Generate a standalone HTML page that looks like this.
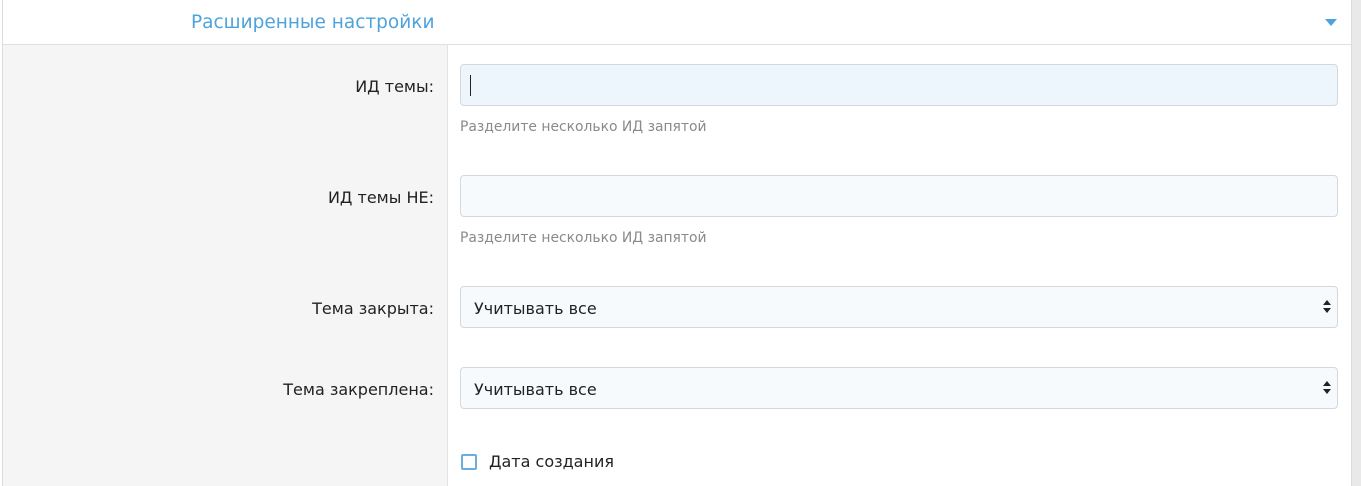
<!DOCTYPE html>
<html><head><meta charset="utf-8"><style>
body{margin:0;width:1361px;height:486px;overflow:hidden;background:#fff;font-family:"DejaVu Sans","Liberation Sans",sans-serif;position:relative}
.abs{position:absolute}
.lbl{right:927px;font-size:16px;color:#222;text-align:right}
.inp{left:460px;width:876px;height:40px;border:1px solid #d4d8dc;border-radius:4px;background:#f7fafd}
.hint{left:460px;font-size:13.9px;color:#8a8a8a}
.sel{font-size:16px;color:#222;line-height:43px;padding-left:13px;box-sizing:border-box;width:878px;height:42px}
.arr{position:absolute;right:6px;top:13px;width:0;height:0}
</style></head><body>
<div class="abs" style="left:2px;top:0;width:1px;height:486px;background:#dcdcdc"></div>
<div class="abs" style="left:1351px;top:0;width:10px;height:486px;background:#e9e9e9;border-left:1px solid #dcdcdc"></div>
<div class="abs" style="left:3px;top:44px;width:1348px;height:1px;background:#e0e0e0"></div>
<div class="abs" style="left:191px;top:12px;font-size:18.5px;color:#4ea3db">Расширенные настройки</div>
<div class="abs" style="left:1325px;top:19px;width:0;height:0;border-left:6px solid transparent;border-right:6px solid transparent;border-top:7px solid #4ea3db"></div>
<div class="abs" style="left:3px;top:45px;width:444px;height:441px;background:#f5f5f5;border-right:1px solid #e3e3e3"></div>

<div class="abs lbl" style="top:77px">ИД темы:</div>
<div class="abs inp" style="top:64px;background:#edf5fd"><div class="abs" style="left:9px;top:10px;width:1px;height:21px;background:#222"></div></div>
<div class="abs hint" style="top:119px">Разделите несколько ИД запятой</div>

<div class="abs lbl" style="top:188px">ИД темы НЕ:</div>
<div class="abs inp" style="top:175px"></div>
<div class="abs hint" style="top:230px">Разделите несколько ИД запятой</div>

<div class="abs lbl" style="top:299px">Тема закрыта:</div>
<div class="abs inp sel" style="top:286px">Учитывать все
<div class="arr" style="top:13px;border-left:4px solid transparent;border-right:4px solid transparent;border-bottom:5px solid #222"></div>
<div class="arr" style="top:21px;border-left:4px solid transparent;border-right:4px solid transparent;border-top:5px solid #222"></div></div>

<div class="abs lbl" style="top:380px">Тема закреплена:</div>
<div class="abs inp sel" style="top:367px">Учитывать все
<div class="arr" style="top:13px;border-left:4px solid transparent;border-right:4px solid transparent;border-bottom:5px solid #222"></div>
<div class="arr" style="top:21px;border-left:4px solid transparent;border-right:4px solid transparent;border-top:5px solid #222"></div></div>

<div class="abs" style="left:461px;top:454px;width:12px;height:12px;border:2px solid #6aaee0;border-radius:2px;background:#fff"></div>
<div class="abs" style="left:489px;top:452px;font-size:16px;color:#222">Дата создания</div>
</body></html>
